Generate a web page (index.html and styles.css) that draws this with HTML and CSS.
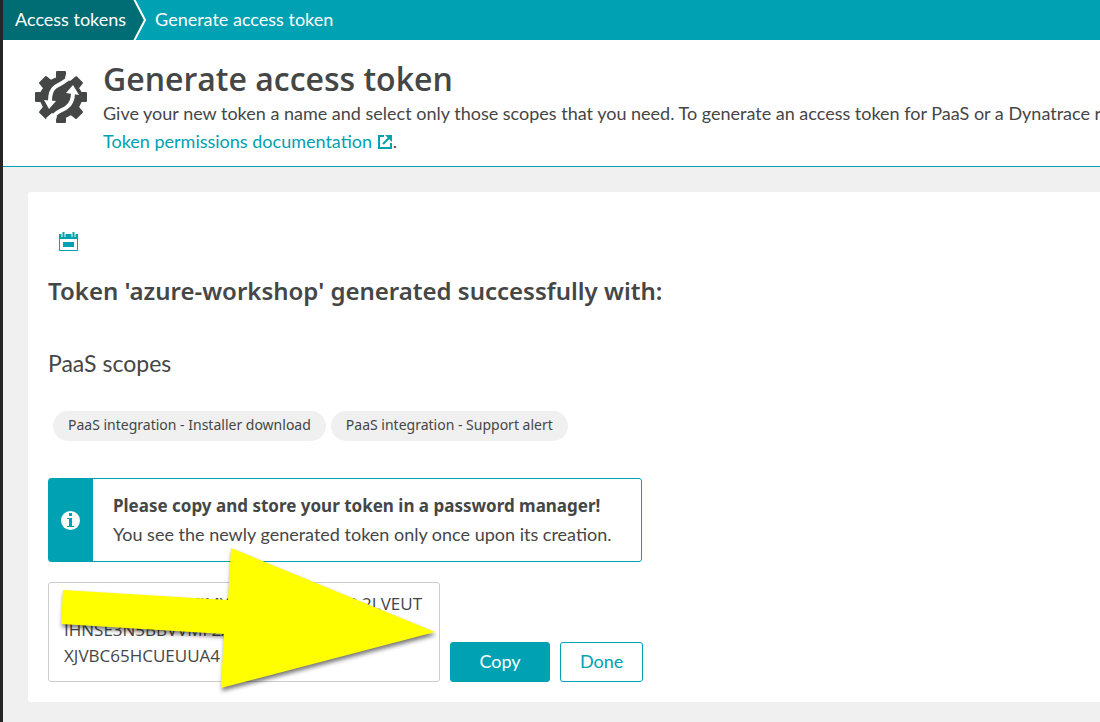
FILE: index.html
```html
<!DOCTYPE html>
<html lang="en">
<head>
<meta charset="utf-8">
<title>Generate access token</title>
<link rel="stylesheet" href="styles.css">
</head>
<body>
<nav class="breadcrumbs" aria-label="Breadcrumb">
  <a class="crumb crumb-parent" href="#tokens">Access tokens</a>
  <svg class="crumb-divider" width="14" height="40" viewBox="0 0 14 40" aria-hidden="true"><path d="M0 0H1L12 20L1 40H0Z" fill="#006d75"/><path d="M1 -1L12 20L1 41" fill="none" stroke="#fff" stroke-width="2"/></svg>
  <a class="crumb" href="#generate" aria-current="page">Generate access token</a>
</nav>
<header class="page-header">
  <svg class="gear" width="54" height="54" viewBox="0 0 54 54" aria-hidden="true">
    <path fill="#454646" stroke="#454646" stroke-width="2" stroke-linejoin="round" d="M23 2H31V8L37 11L42 7L48 13L44 18L47 23H52V31H47L44 37L48 42L42 48L37 44L31 47V52H23V47L17 44L12 48L6 42L10 37L7 31H2V23H7L10 18L6 13L12 7L17 11L23 8Z"/>
    <path fill="none" stroke="#fff" stroke-width="4" d="M36 5C34 12 26 13 21 17C17 20 16 25 16 31M18 49C20 42 28 41 33 37C37 34 39 29 39 23"/>
    <path fill="#fff" d="M33 0H38L42 6L36 11L31 8ZM21 54H16L12 48L18 43L23 46ZM10 30L22 31L15 39ZM32 23L39 15L45 25Z"/>
  </svg>
  <div class="intro">
    <h1 class="title">Generate access token</h1>
    <p class="description">Give your new token a name and select only those scopes that you need. To generate an access token for PaaS or a Dynatrace r</p>
    <p class="description"><a class="doc-link" href="#documentation">Token permissions documentation <svg width="16" height="16" viewBox="0 0 16 16" aria-hidden="true"><path d="M7 2H2V14H14V9M6 10L13 3" fill="none" stroke="currentColor" stroke-width="2"/><path d="M8 1H15V8Z" fill="currentColor"/></svg></a>.</p>
  </div>
</header>
<main class="content">
  <section class="card">
    <svg class="calendar" width="20" height="20" viewBox="0 0 20 20" aria-hidden="true"><path d="M.5 2.5H18.5V18.500H.5Z" fill="#fff" stroke="#00a1b2"/><path d="M0 2H19V7H0Z" fill="#00a1b2"/><path d="M4.500 0V5M14.500 0V5" stroke="#fff" stroke-width="4"/><path d="M4.500 0V5M14.500 0V5" stroke="#00a1b2" stroke-width="2"/><path d="M4 10H15V15H4Z" fill="#00a1b2"/></svg>
    <h2 class="result">Token 'azure-workshop' generated successfully with:</h2>
    <h3 class="scopes-title">PaaS scopes</h3>
    <ul class="scopes">
      <li class="scope">PaaS integration - Installer download</li>
      <li class="scope">PaaS integration - Support alert</li>
    </ul>
    <div class="notice">
      <div class="notice-icon"><svg width="19" height="19" viewBox="0 0 19 19" aria-hidden="true"><circle cx="9.500" cy="9.500" r="9.500" fill="#fff"/><path d="M8 2H11V5H8ZM6 7H11V15H13V16H6V15H8V8H6Z" fill="#00a1b2"/></svg></div>
      <div class="notice-text"><strong>Please copy and store your token in a password manager!</strong><p>You see the newly generated token only once upon its creation.</p></div>
    </div>
    <div class="token-row">
      <textarea class="token" aria-label="Generated token" readonly>dt0c01.XXXXXXXFIMYXXXXXXXXXXXXR.2LVEUT
IHNSE3N5BBVVMF2XXXXXXXXXXXXXXXXXXX4
XJVBC65HCUEUUA4</textarea>
      <button class="button primary" type="button">Copy</button>
      <button class="button" type="button">Done</button>
      <svg class="arrow" width="390" height="156" viewBox="0 0 390 156" aria-hidden="true"><path d="M16 50L181 60L184 8L388 92L174 148L177 94L14 84Z" fill="#ff0"/></svg>
    </div>
  </section>
</main>
</body>
</html>
```
FILE: styles.css
```css
* { box-sizing: border-box; }
body {
  margin: 0;
  min-height: 100vh;
  border-left: 3px solid #252525;
  background: #f0f0f0;
  color: #454646;
  font: 18px/28px Lato, sans-serif;
}
h1, h2, h3, p, ul { margin: 0; padding: 0; }
.breadcrumbs { display: flex; height: 40px; background: #00a1b2; line-height: 38px; }
.crumb { color: #fff; text-decoration: none; padding-left: 8px; }
.crumb-parent { background: #006d75; padding: 0 7px 0 12px; }
.page-header {
  display: flex;
  gap: 15px;
  padding: 19px 0 11px 31px;
  border-bottom: 1px solid #00a1b2;
  background: #fff;
  overflow: hidden;
}
.gear { flex: none; margin-top: 11px; }
.intro { min-width: 0; }
.title { font: 600 32px/40px "Open Sans", sans-serif; }
.description { white-space: nowrap; }
.doc-link { color: #00a1b2; text-decoration: none; }
.doc-link svg { vertical-align: -2px; }
.content { padding: 25px 0 20px 25px; }
.card { padding: 40px 20px 20px; border-radius: 3px 0 0 3px; background: #fff; }
.calendar { display: block; margin-left: 11px; }
.result { margin-top: 23px; font: 600 24px/32px "Noto Sans", sans-serif; }
.scopes-title { margin-top: 40px; font-size: 23px; line-height: 32px; font-weight: 400; }
.scopes { display: flex; gap: 5px; margin: 32px 0 0 5px; list-style: none; }
.scope { padding: 0 15px 2px; border-radius: 15px; background: #f0f0f0; font: 14px/28px "Noto Sans", sans-serif; }
.notice {
  display: flex;
  width: 594px;
  max-width: 100%;
  margin-top: 37px;
  border: 1px solid #00a1b2;
  border-radius: 3px;
}
.notice-icon { display: grid; place-items: center; width: 44px; padding-right: 1px; background: #00a1b2; }
.notice-text { padding: 13px 20px; white-space: nowrap; }
.notice-text strong { display: block; font: 700 17px/28px "Noto Sans", sans-serif; }
.token-row { position: relative; display: flex; align-items: flex-end; gap: 10px; margin-top: 20px; }
.token {
  width: 392px;
  height: 100px;
  padding: 8px 15px;
  border: 1px solid #ccc;
  border-radius: 3px;
  background: #fff;
  color: #454646;
  font: 17px/26px "Open Sans", sans-serif;
  white-space: pre;
  resize: none;
  overflow: hidden;
}
.button {
  height: 40px;
  padding: 0 19px 3px;
  border: 1px solid #00a1b2;
  border-radius: 3px;
  background: #fff;
  color: #00a1b2;
  font: 18px/34px Lato, sans-serif;
}
.primary { min-width: 100px; background: #00a1b2; color: #fff; }
.arrow { position: absolute; left: -1px; top: -42px; overflow: visible; filter: drop-shadow(1px 3px 2px #0008); }
```
